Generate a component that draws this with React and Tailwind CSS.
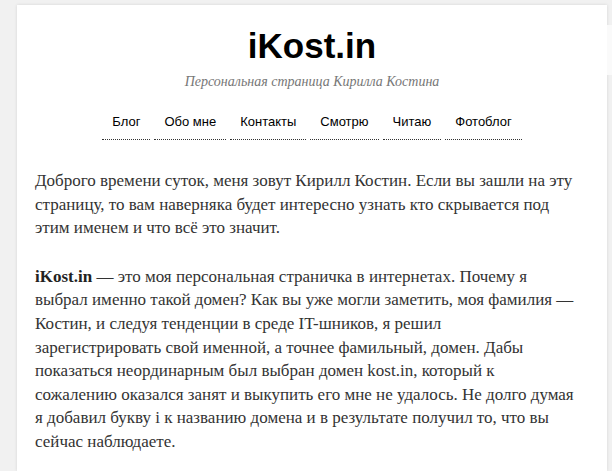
import React from "react";

const navItems = ["Блог", "Обо мне", "Контакты", "Смотрю", "Читаю", "Фотоблог"];

const intro = [
  "Доброго времени суток, меня зовут Кирилл Костин. Если вы зашли на эту",
  "страницу, то вам наверняка будет интересно узнать кто скрывается под",
  "этим именем и что всё это значит.",
];

const about = [
  "выбрал именно такой домен? Как вы уже могли заметить, моя фамилия —",
  "Костин, и следуя тенденции в среде IT-шников, я решил",
  "зарегистрировать свой именной, а точнее фамильный, домен. Дабы",
  "показаться неординарным был выбран домен kost.in, который к",
  "сожалению оказался занят и выкупить его мне не удалось. Не долго думая",
  "я добавил букву i к названию домена и в результате получил то, что вы",
  "сейчас наблюдаете.",
];

const Lines = ({ lines }) =>
  lines.map((line, i) => (
    <React.Fragment key={i}>
      {line}
      {i < lines.length - 1 && <br />}
    </React.Fragment>
  ));

const App = () => {
  return (
    <div className="h-screen overflow-hidden bg-[#f1f1f1] flex pt-[5px] pl-[17px]">
      <div className="w-[590px] shrink-0 bg-white shadow-[0_0_3px_rgba(0,0,0,0.12)] pl-[18px] pt-[21px]">
        <div className="w-[554px]">
          <header className="flex flex-col items-center">
            <h1 className="font-['Liberation_Sans',Arial,sans-serif] font-bold text-[35px] leading-[40px] text-black">
              iKost.in
            </h1>
            <p className="mt-[6px] font-['Liberation_Serif',serif] italic text-[14px] leading-[20px] text-[#777]">
              Персональная страница Кирилла Костина
            </p>
            <nav className="mt-[22px] flex gap-[4px]">
              {navItems.map((item) => (
                <a
                  key={item}
                  href="#"
                  className="px-[10px] pb-[9px] border-b border-dotted border-[#333] font-['Liberation_Sans',Arial,sans-serif] text-[13px] leading-[16px] text-black"
                >
                  {item}
                </a>
              ))}
            </nav>
          </header>

          <main className="mt-[29px] font-['Liberation_Serif',serif] text-[17px] leading-[23.6px] text-[#333] whitespace-nowrap">
            <p>
              <Lines lines={intro} />
            </p>
            <p className="mt-[25px]">
              <strong className="font-bold text-[#222]">iKost.in</strong> — это моя
              персональная страничка в интернетах. Почему я
              <br />
              <Lines lines={about} />
            </p>
          </main>
        </div>
      </div>
      <div className="w-[5px] shrink-0 pt-[20px]">
        <div className="h-[50px] bg-[#fafafa]" />
      </div>
    </div>
  );
};

export default App;
